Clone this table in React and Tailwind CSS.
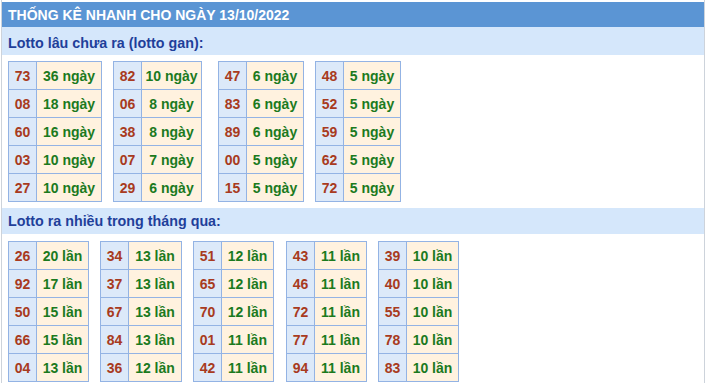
import React from "react"

const ganTables = [
    { ml: "ml-[6px]", val: "w-[65px]", rows: [["73", "36 ngày"], ["08", "18 ngày"], ["60", "16 ngày"], ["03", "10 ngày"], ["27", "10 ngày"]] },
    { ml: "ml-[11px]", val: "w-[60px]", rows: [["82", "10 ngày"], ["06", "8 ngày"], ["38", "8 ngày"], ["07", "7 ngày"], ["29", "6 ngày"]] },
    { ml: "ml-[16px]", val: "w-[57px]", rows: [["47", "6 ngày"], ["83", "6 ngày"], ["89", "6 ngày"], ["00", "5 ngày"], ["15", "5 ngày"]] },
    { ml: "ml-[11px]", val: "w-[57px]", rows: [["48", "5 ngày"], ["52", "5 ngày"], ["59", "5 ngày"], ["62", "5 ngày"], ["72", "5 ngày"]] },
]

const nhieuTables = [
    { ml: "ml-[6px]", val: "w-[52px]", rows: [["26", "20 lần"], ["92", "17 lần"], ["50", "15 lần"], ["66", "15 lần"], ["04", "13 lần"]] },
    { ml: "ml-[11px]", val: "w-[53px]", rows: [["34", "13 lần"], ["37", "13 lần"], ["67", "13 lần"], ["84", "13 lần"], ["36", "12 lần"]] },
    { ml: "ml-[11px]", val: "w-[52px]", rows: [["51", "12 lần"], ["65", "12 lần"], ["70", "12 lần"], ["01", "11 lần"], ["42", "11 lần"]] },
    { ml: "ml-[12px]", val: "w-[52px]", rows: [["43", "11 lần"], ["46", "11 lần"], ["72", "11 lần"], ["77", "11 lần"], ["94", "11 lần"]] },
    { ml: "ml-[11px]", val: "w-[52px]", rows: [["39", "10 lần"], ["40", "10 lần"], ["55", "10 lần"], ["78", "10 lần"], ["83", "10 lần"]] },
]

const LottoTable = ({ table }) => {
    return (
        <div className={`${table.ml} flex flex-col border-t border-l border-[#93b3e4]`}>
            {table.rows.map(([num, val]) => (
                <div key={num} className="flex h-[28px]">
                    <div className="w-[28px] h-full flex items-center justify-center border-r border-b border-[#93b3e4] bg-[#dce9f9] text-[#a83a20]">
                        {num}
                    </div>
                    <div className={`${table.val} h-full flex items-center justify-center border-r border-b border-[#93b3e4] bg-[#fff2df] text-[#1b7a1e]`}>
                        {val}
                    </div>
                </div>
            ))}
        </div>
    )
}

const App = () => {
    return (
        <div className="w-[706px] h-[383px] bg-white overflow-hidden font-['Liberation_Sans',Arial,sans-serif] font-bold text-[14px] leading-4">
            <div className="ml-[1px] w-[704px] h-full border-x border-[#cdd3db] pt-[2px]">
                <div className="h-[25px] bg-[#5b95d4] text-white pl-[6px] pt-[5px]">
                    THỐNG KÊ NHANH CHO NGÀY 13/10/2022
                </div>

                <div className="h-[28px] bg-[#d5e7fb] text-[#1f3f9a] text-[14.3px] pl-[6px] pt-[8px]">
                    Lotto lâu chưa ra (lotto gan):
                </div>
                <div className="flex items-start mt-[6px]">
                    {ganTables.map((t, i) => <LottoTable key={i} table={t} />)}
                </div>

                <div className="h-[26px] mt-[6px] bg-[#d5e7fb] text-[#1f3f9a] text-[14.3px] pl-[6px] pt-[5px]">
                    Lotto ra nhiều trong tháng qua:
                </div>
                <div className="flex items-start mt-[7px]">
                    {nhieuTables.map((t, i) => <LottoTable key={i} table={t} />)}
                </div>
            </div>
        </div>
    )
}

export default App
